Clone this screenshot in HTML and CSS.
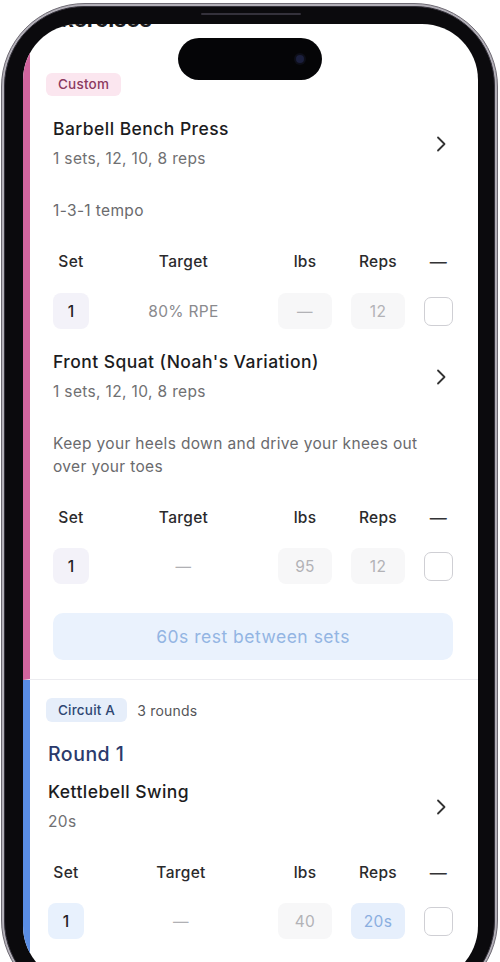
FILE: index.html
```html
<!DOCTYPE html>
<html lang="en">
<head>
<meta charset="utf-8">
<title>Workout</title>
<link rel="stylesheet" href="styles.css">
</head>
<body>
<div class="phone">
  <div class="bezel">
    <div class="speaker"></div>
    <div class="screen">
      <div class="island"><span class="cam"></span></div>

      <section class="block block-custom">
        <h1 class="heading">Exercises</h1>
        <span class="badge badge-pink">Custom</span>

        <div class="exercise">
          <div class="ex-head">
            <div>
              <div class="ex-title">Barbell Bench Press</div>
              <div class="ex-sub">1 sets, 12, 10, 8 reps</div>
            </div>
            <svg class="chev" width="10" height="16" viewBox="0 0 10 16"><path d="M2 1.5 L8.5 8 L2 14.5" fill="none" stroke="#333" stroke-width="1.8" stroke-linecap="round" stroke-linejoin="round"/></svg>
          </div>
          <p class="note">1-3-1 tempo</p>
          <div class="grid grid-head">
            <span>Set</span><span>Target</span><span>lbs</span><span>Reps</span><span class="dash-h">—</span>
          </div>
          <div class="grid grid-vals">
            <span class="box box-set">1</span>
            <span class="target">80% RPE</span>
            <span class="box box-in">—</span>
            <span class="box box-in">12</span>
            <span class="check"></span>
          </div>
        </div>

        <div class="exercise">
          <div class="ex-head">
            <div>
              <div class="ex-title">Front Squat (Noah's Variation)</div>
              <div class="ex-sub">1 sets, 12, 10, 8 reps</div>
            </div>
            <svg class="chev" width="10" height="16" viewBox="0 0 10 16"><path d="M2 1.5 L8.5 8 L2 14.5" fill="none" stroke="#333" stroke-width="1.8" stroke-linecap="round" stroke-linejoin="round"/></svg>
          </div>
          <p class="note">Keep your heels down and drive your knees out over your toes</p>
          <div class="grid grid-head">
            <span>Set</span><span>Target</span><span>lbs</span><span>Reps</span><span class="dash-h">—</span>
          </div>
          <div class="grid grid-vals">
            <span class="box box-set">1</span>
            <span class="target target-empty">—</span>
            <span class="box box-in">95</span>
            <span class="box box-in">12</span>
            <span class="check"></span>
          </div>
          <div class="rest">60s rest between sets</div>
        </div>
      </section>

      <section class="block block-circuit">
        <div class="circuit-top">
          <span class="badge badge-blue">Circuit A</span>
          <span class="rounds">3 rounds</span>
        </div>
        <div class="round">Round 1</div>
        <div class="exercise exercise-c">
          <div class="ex-head">
            <div>
              <div class="ex-title">Kettlebell Swing</div>
              <div class="ex-sub">20s</div>
            </div>
            <svg class="chev" width="10" height="16" viewBox="0 0 10 16"><path d="M2 1.5 L8.5 8 L2 14.5" fill="none" stroke="#333" stroke-width="1.8" stroke-linecap="round" stroke-linejoin="round"/></svg>
          </div>
          <div class="grid grid-head grid-head-c">
            <span>Set</span><span>Target</span><span>lbs</span><span>Reps</span><span class="dash-h">—</span>
          </div>
          <div class="grid grid-vals">
            <span class="box box-set-blue">1</span>
            <span class="target target-empty">—</span>
            <span class="box box-in">40</span>
            <span class="box box-blue">20s</span>
            <span class="check"></span>
          </div>
        </div>
      </section>
    </div>
  </div>
</div>
</body>
</html>
```

FILE: styles.css
```css
html, body {
  margin: 0;
  padding: 0;
  overflow: hidden;
  background: #ffffff;
}

body {
  font-family: Inter, "Noto Sans", "Liberation Sans", sans-serif;
  color: #1c1c1e;
}

.phone {
  box-sizing: border-box;
  width: 497px;
  margin: 3px 0 0 1px;
  padding: 2px;
  border: 1px solid #6f6b74;
  border-radius: 84px;
  background: #b3b0b8;
}

.bezel {
  position: relative;
  padding: 17px 16px 18px 18px;
  border: 1px solid #34313a;
  border-radius: 80px;
  background: #0b0a0d;
}

.speaker {
  position: absolute;
  top: 6px;
  left: 196px;
  width: 100px;
  height: 2px;
  border-radius: 1px;
  background: #34313b;
}

.screen {
  position: relative;
  height: 958px;
  background: #ffffff;
  border-radius: 56px;
  overflow: hidden;
}

.island {
  position: absolute;
  top: 14px;
  left: 155px;
  width: 144px;
  height: 42px;
  border-radius: 21px;
  background: #050507;
  z-index: 2;
}

.cam {
  position: absolute;
  top: 17px;
  left: 118px;
  width: 8px;
  height: 8px;
  border-radius: 50%;
  background: #1b1f3d;
  box-shadow: 0 0 0 2px #0d0e18;
}

.block {
  display: flex;
  flex-direction: column;
  align-items: flex-start;
}

.block-custom {
  border-left: 7px solid #d1649d;
  border-bottom: 1px solid #ececf0;
  padding: 0 25px 19px 16px;
}

.block-circuit {
  border-left: 7px solid #5a8de4;
  padding: 18px 25px 40px 18px;
  min-height: 400px;
}

.heading {
  margin: -19px 0 0 2px;
  font-size: 22px;
  line-height: 28px;
  font-weight: 700;
  color: #1c1c1e;
}

.badge {
  display: inline-block;
  padding: 0 12px;
  border-radius: 6px;
  font-size: 13.5px;
  font-weight: 500;
  letter-spacing: 0.2px;
}

.badge-pink {
  margin-top: 40px;
  height: 23px;
  line-height: 23px;
  background: #fbe6ef;
  color: #8b3a5f;
}

.circuit-top {
  display: flex;
  align-items: center;
  gap: 10px;
  margin-left: -2px;
}

.badge-blue {
  height: 24px;
  line-height: 24px;
  background: #e6eefa;
  color: #2e4672;
}

.rounds {
  font-size: 14px;
  letter-spacing: 0.2px;
  color: #555558;
}

.round {
  margin-top: 19px;
  font-size: 19.5px;
  line-height: 27px;
  font-weight: 500;
  letter-spacing: 0.5px;
  color: #2b3a6b;
}

.exercise {
  align-self: stretch;
  margin-left: 7px;
  margin-top: 21px;
}

.exercise-c {
  margin-left: 0;
  margin-top: 12px;
}

.ex-head {
  display: flex;
  align-items: center;
  justify-content: space-between;
  padding-right: 7px;
}

.ex-title {
  font-size: 17.5px;
  line-height: 24px;
  font-weight: 500;
  letter-spacing: 0.45px;
  color: #1c1c1e;
}

.ex-sub {
  margin-top: 6px;
  font-size: 15.5px;
  line-height: 24px;
  letter-spacing: 0.35px;
  color: #707072;
}

.chev {
  display: block;
  flex: none;
}

.note {
  margin: 28px 0 0 0;
  font-size: 15.5px;
  line-height: 23px;
  letter-spacing: 0.35px;
  color: #6a6a6d;
  max-width: 380px;
}

.grid {
  display: grid;
  grid-template-columns: 36px 1fr 54px 54px 29px;
  column-gap: 19px;
  align-items: center;
  justify-items: center;
}

.grid-head {
  margin-top: 28px;
  font-size: 15.5px;
  line-height: 24px;
  font-weight: 500;
  letter-spacing: 0.3px;
  color: #2a2a2c;
}

.grid-head-c {
  margin-top: 27px;
}

.dash-h {
  font-size: 17px;
  color: #333335;
}

.grid-vals {
  margin-top: 19px;
}

.exercise + .exercise .grid-vals,
.exercise-c .grid-vals {
  margin-top: 18px;
}

.box {
  display: flex;
  align-items: center;
  justify-content: center;
  width: 100%;
  height: 36px;
  border-radius: 8px;
  font-size: 15.5px;
  letter-spacing: 0.3px;
}

.box-set {
  background: #f3f2f9;
  color: #222224;
  font-weight: 500;
}

.box-set-blue {
  background: #e8f1fd;
  color: #222224;
  font-weight: 500;
}

.box-in {
  background: #f7f7f8;
  color: #b2b2b6;
}

.box-blue {
  background: #e6effc;
  color: #8aaee0;
}

.target {
  font-size: 15.5px;
  letter-spacing: 0.35px;
  color: #8a8a8e;
}

.target-empty {
  color: #b0b0b4;
}

.check {
  box-sizing: border-box;
  width: 29px;
  height: 29px;
  border: 1.5px solid #cfcfd4;
  border-radius: 7px;
  background: #ffffff;
}

.rest {
  margin-top: 29px;
  height: 47px;
  line-height: 47px;
  border-radius: 10px;
  background: #eaf2fd;
  color: #93b5e3;
  font-size: 17.5px;
  letter-spacing: 0.5px;
  text-align: center;
}
```
